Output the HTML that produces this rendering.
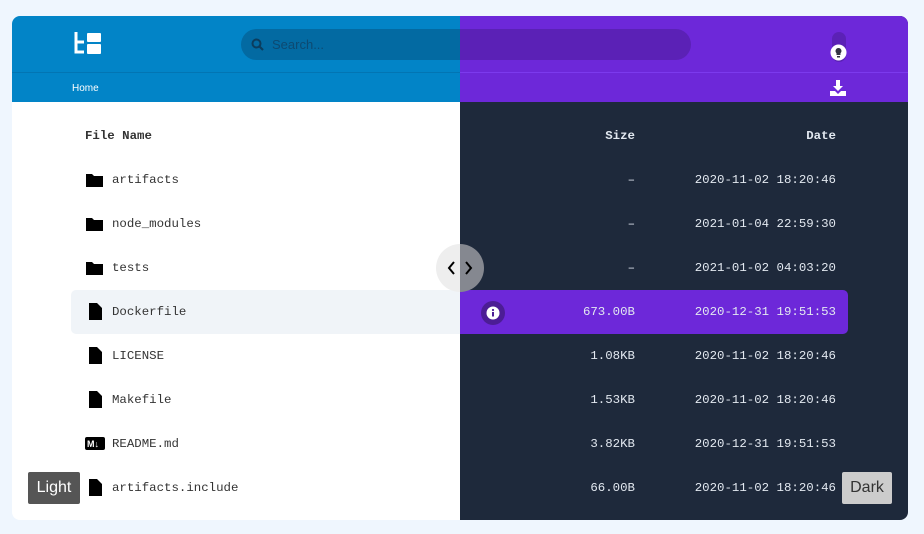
<!DOCTYPE html><html><head><style>
body{margin:0;width:924px;height:534px;background:#eff6fe;font-family:"Liberation Sans",sans-serif;position:relative;overflow:hidden}
.card{position:absolute;left:12px;top:16px;width:896px;height:504px;border-radius:8px;overflow:hidden}
.layer{position:absolute;inset:0}
.hd{position:absolute;left:0;top:0;width:896px;height:57px}
.bc{position:absolute;left:0;top:56px;width:896px;height:29px}
.search{position:absolute;left:229px;top:13px;width:450px;height:31px;border-radius:16px}
.row{position:absolute;left:59px;width:777px;height:44px;font-family:"Liberation Mono",monospace;font-size:12.4px}
.row span{position:absolute;top:15px}
.nm{left:41px}.sz{right:213px;text-align:right}.dt{right:12px}
.ic{position:absolute;left:15px;top:15px}
.lt{clip-path:inset(0 448px 0 0)}
.dk{clip-path:inset(0 0 0 448px)}
</style></head><body>
<div class="card">
<!-- light -->
<div class="layer lt" style="background:#fff;color:#333">
<div class="hd" style="background:#0284c7"></div>
<div class="bc" style="background:#0284c7;border-top:1px solid #0275b3"></div>
<svg style="position:absolute;left:62px;top:16px" width="27" height="24" viewBox="0 0 27 24"><path d="M2 0v20h8" stroke="#fff" stroke-width="3" fill="none"/><path d="M2 10h8" stroke="#fff" stroke-width="3"/><rect x="13" y="1" width="14" height="9" rx="1" fill="#fff"/><rect x="13" y="12" width="14" height="10" rx="1" fill="#fff"/></svg>
<div class="search" style="background:#036aa2"><svg style="position:absolute;left:10px;top:9px" width="13" height="13"><circle cx="5.5" cy="5.5" r="4" stroke="#0b3d5e" stroke-width="2" fill="none"/><path d="M8.5 8.5l3.5 3.5" stroke="#0b3d5e" stroke-width="2.2"/></svg><span style="position:absolute;left:31px;top:8px;font-size:13px;color:#0d4a72">Search...</span></div>
<span style="position:absolute;left:60px;top:67px;font-size:10px;color:#fff">Home</span>
<div class="row" style="top:98px;font-weight:bold"><span class="nm" style="left:14px">File Name</span></div>
<div class="row" style="top:142px"><svg class="ic" width="17" height="14"><path d="M0 1h6l2 2h9v11H0z" fill="#000"/></svg><span class="nm">artifacts</span></div>
<div class="row" style="top:186px"><svg class="ic" width="17" height="14"><path d="M0 1h6l2 2h9v11H0z" fill="#000"/></svg><span class="nm">node_modules</span></div>
<div class="row" style="top:230px"><svg class="ic" width="17" height="14"><path d="M0 1h6l2 2h9v11H0z" fill="#000"/></svg><span class="nm">tests</span></div>
<div class="row" style="top:274px;background:#f0f4f8;border-radius:5px"><svg class="ic" style="left:18px;top:13px" width="13" height="17"><path d="M0 0h8l5 5v12H0z" fill="#000"/></svg><span class="nm">Dockerfile</span></div>
<div class="row" style="top:318px"><svg class="ic" style="left:18px;top:13px" width="13" height="17"><path d="M0 0h8l5 5v12H0z" fill="#000"/></svg><span class="nm">LICENSE</span></div>
<div class="row" style="top:362px"><svg class="ic" style="left:18px;top:13px" width="13" height="17"><path d="M0 0h8l5 5v12H0z" fill="#000"/></svg><span class="nm">Makefile</span></div>
<div class="row" style="top:406px"><svg class="ic" style="left:14px;top:15px" width="20" height="13"><rect width="20" height="13" rx="2" fill="#000"/><text x="2" y="10" font-size="9" font-weight="bold" fill="#fff" font-family="Liberation Sans">M↓</text></svg><span class="nm">README.md</span></div>
<div class="row" style="top:450px"><svg class="ic" style="left:18px;top:13px" width="13" height="17"><path d="M0 0h8l5 5v12H0z" fill="#000"/></svg><span class="nm">artifacts.include</span></div>
</div>
<!-- dark -->
<div class="layer dk" style="background:#1e293b;color:#e2e8f0">
<div class="hd" style="background:#6d28d9"></div>
<div class="bc" style="background:#6d28d9;border-top:1px solid #7c3aed"></div>
<div class="search" style="background:#5b21b6"></div>
<div style="position:absolute;left:820px;top:16px;width:14px;height:30px;border-radius:7px;background:#5b21b6"></div>
<svg style="position:absolute;left:818px;top:28px" width="17" height="17"><circle cx="8.5" cy="8.5" r="8" fill="#fff"/><path d="M8.5 4a3 3 0 0 0-2 5.2v1.8h4v-1.8a3 3 0 0 0-2-5.2zM7 12h3v1.5H7z" fill="#334"/></svg>
<svg style="position:absolute;left:818px;top:64px" width="16" height="16"><path d="M6 0h4v6h3l-5 5-5-5h3z M0 11h5l3 3 3-3h5v5H0z" fill="#fff"/></svg>
<div class="row" style="top:98px;font-weight:bold"><span class="sz">Size</span><span class="dt">Date</span></div>
<div class="row" style="top:142px"><span class="sz">–</span><span class="dt">2020-11-02 18:20:46</span></div>
<div class="row" style="top:186px"><span class="sz">–</span><span class="dt">2021-01-04 22:59:30</span></div>
<div class="row" style="top:230px"><span class="sz">–</span><span class="dt">2021-01-02 04:03:20</span></div>
<div class="row" style="top:274px;background:#6d28d9;border-radius:5px"><svg style="position:absolute;left:410px;top:11px" width="24" height="24"><circle cx="12" cy="12" r="12" fill="#4c1d95"/><circle cx="12" cy="12" r="6.5" fill="#fff"/><rect x="11" y="11" width="2" height="4.5" fill="#4c1d95"/><circle cx="12" cy="9" r="1.1" fill="#4c1d95"/></svg><span class="sz">673.00B</span><span class="dt">2020-12-31 19:51:53</span></div>
<div class="row" style="top:318px"><span class="sz">1.08KB</span><span class="dt">2020-11-02 18:20:46</span></div>
<div class="row" style="top:362px"><span class="sz">1.53KB</span><span class="dt">2020-11-02 18:20:46</span></div>
<div class="row" style="top:406px"><span class="sz">3.82KB</span><span class="dt">2020-12-31 19:51:53</span></div>
<div class="row" style="top:450px"><span class="sz">66.00B</span><span class="dt">2020-11-02 18:20:46</span></div>
</div>
</div>
<div style="position:absolute;left:436px;top:244px;width:48px;height:48px;border-radius:50%;overflow:hidden">
<div style="position:absolute;left:0;top:0;width:24px;height:48px;background:#eeeeee"></div>
<div style="position:absolute;left:24px;top:0;width:24px;height:48px;background:#858890"></div>
<svg style="position:absolute;left:0;top:0" width="48" height="48"><path d="M18 18l-5 6 5 6M30 18l5 6-5 6" stroke="#000" stroke-width="2" fill="none"/></svg>
</div>
<div style="position:absolute;left:28px;top:472px;width:52px;height:32px;background:#555;border-radius:2px;color:#fff;font-size:16px;line-height:32px;text-align:center">Light</div>
<div style="position:absolute;left:842px;top:472px;width:50px;height:32px;background:#ccc;border-radius:2px;color:#333;font-size:16px;line-height:32px;text-align:center">Dark</div>
</body></html>
